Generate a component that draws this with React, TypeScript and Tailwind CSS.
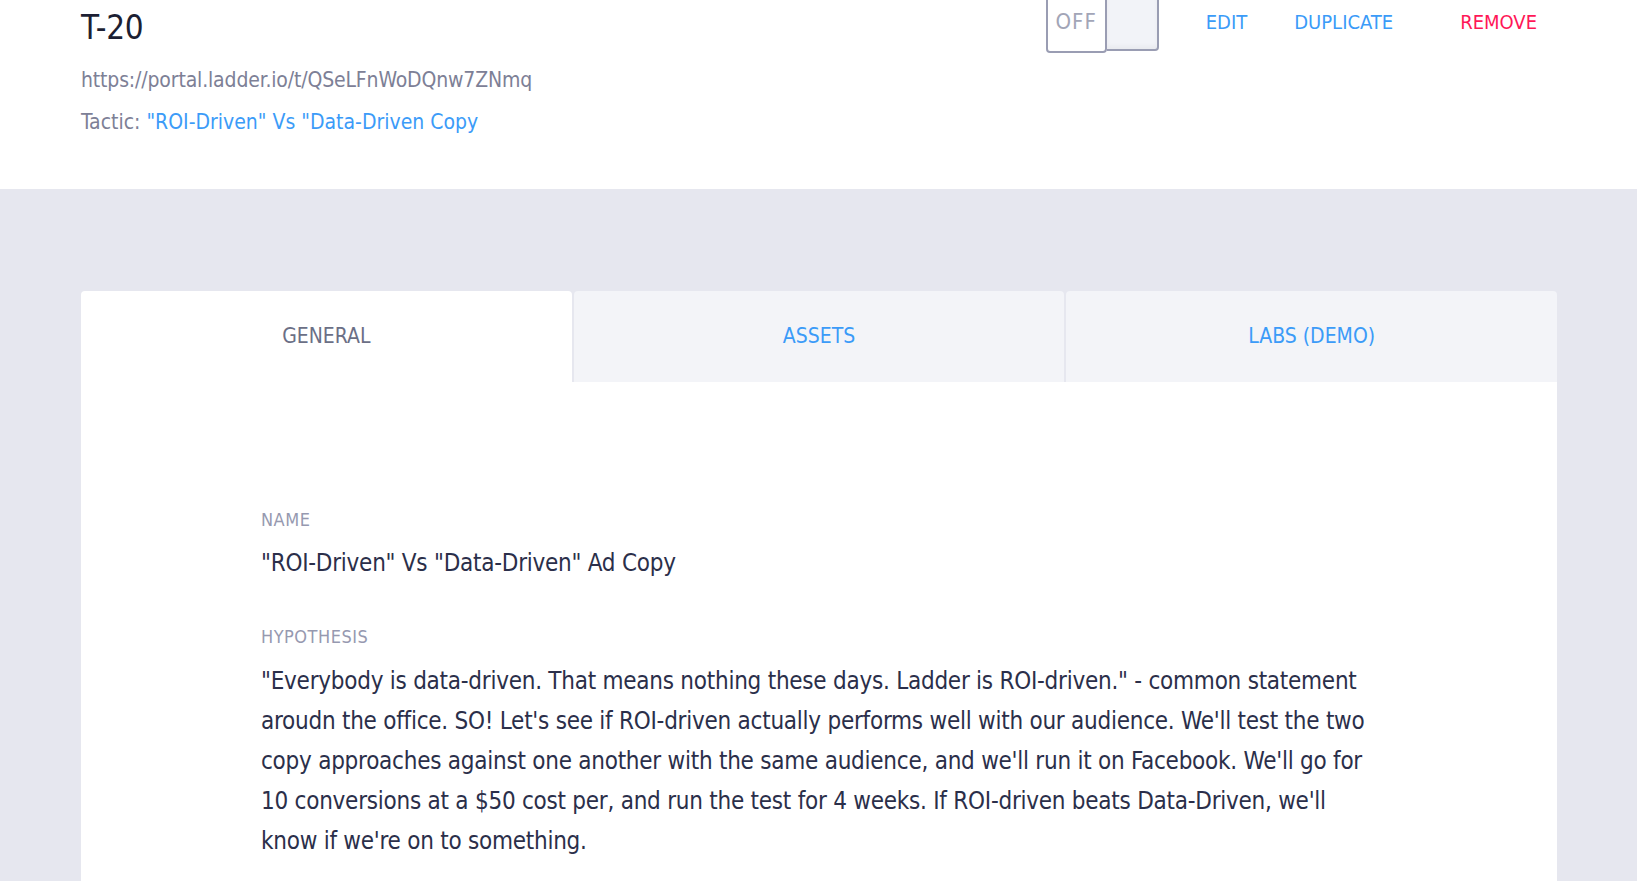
import React from "react";

const font = {
  fontFamily:
    '"Liberation Sans Narrow", "DejaVu Sans Condensed", "Roboto Condensed", "Open Sans Condensed", Roboto, sans-serif',
};

function Toggle() {
  return (
    <div className="flex items-start -mt-[10px]">
      <div className="w-[61px] h-[63px] bg-white border-2 border-[#9a9db3] rounded-b-[4px] flex items-end justify-center pb-[18px] text-[22px] tracking-[1px] text-[#a2a5b7] leading-none">
        OFF
      </div>
      <div className="w-[52px] h-[61px] bg-[#f2f3f8] border-2 border-l-0 border-[#9a9db3] rounded-br-[4px] shadow-[inset_0_-3px_4px_rgba(0,0,0,0.04)]" />
    </div>
  );
}

export default function App() {
  return (
    <div className="min-h-[881px] bg-[#e6e7ef]" style={font}>
      <div className="bg-white h-[189px] pl-[81px] pr-[100px] flex justify-between">
        <div className="pt-[5px]">
          <h1 className="text-[33px] leading-[46px] tracking-[-0.3px] text-[#1c1f33]">T-20</h1>
          <div className="mt-[9px] text-[21px] leading-[40px] tracking-[-0.15px] text-[#7d8096]">
            https://portal.ladder.io/t/QSeLFnWoDQnw7ZNmq
          </div>
          <div className="mt-[2px] text-[21px] leading-[40px] text-[#7d8096]">
            Tactic:{" "}
            <a className="text-[#3b9bf8]">"ROI-Driven" Vs "Data-Driven Copy</a>
          </div>
        </div>
        <div className="flex items-start">
          <Toggle />
          <a className="ml-[47px] mt-[7px] text-[20px] leading-[30px] text-[#3b9bf8]">EDIT</a>
          <a className="ml-[47px] mt-[7px] text-[20px] leading-[30px] text-[#3b9bf8]">DUPLICATE</a>
          <a className="ml-[67px] mt-[7px] text-[20px] leading-[30px] text-[#ff1757]">REMOVE</a>
        </div>
      </div>

      <div className="pt-[102px] pl-[81px] pr-[80px]">
        <div className="flex gap-[2px]">
          <div className="flex-1 h-[91px] bg-white rounded-t-[4px] flex items-center justify-center text-[21px] text-[#6b6f86]">
            GENERAL
          </div>
          <div className="flex-1 h-[91px] bg-[#f3f4f8] rounded-t-[4px] flex items-center justify-center text-[21px] text-[#3b9bf8]">
            ASSETS
          </div>
          <div className="flex-1 h-[91px] bg-[#f3f4f8] rounded-t-[4px] flex items-center justify-center text-[21px] text-[#3b9bf8]">
            LABS (DEMO)
          </div>
        </div>
        <div className="bg-white px-[180px] pt-[126px] pb-[60px]">
          <div className="text-[18px] leading-[24px] tracking-[0.5px] text-[#9699b0]">NAME</div>
          <div className="mt-[11px] text-[24px] leading-[40px] tracking-[-0.25px] text-[#2b2f4a]">
            "ROI-Driven" Vs "Data-Driven" Ad Copy
          </div>
          <div className="mt-[42px] text-[18px] leading-[24px] tracking-[0.5px] text-[#9699b0]">HYPOTHESIS</div>
          <p className="mt-[12px] text-[24px] leading-[40px] tracking-[-0.25px] text-[#2b2f4a]">
            "Everybody is data-driven. That means nothing these days. Ladder is ROI-driven." - common statement
            aroudn the office. SO! Let's see if ROI-driven actually performs well with our audience. We'll test the two
            copy approaches against one another with the same audience, and we'll run it on Facebook. We'll go for 10
            conversions at a $50 cost per, and run the test for 4 weeks. If ROI-driven beats Data-Driven, we'll know if
            we're on to something.
          </p>
        </div>
      </div>
    </div>
  );
}
